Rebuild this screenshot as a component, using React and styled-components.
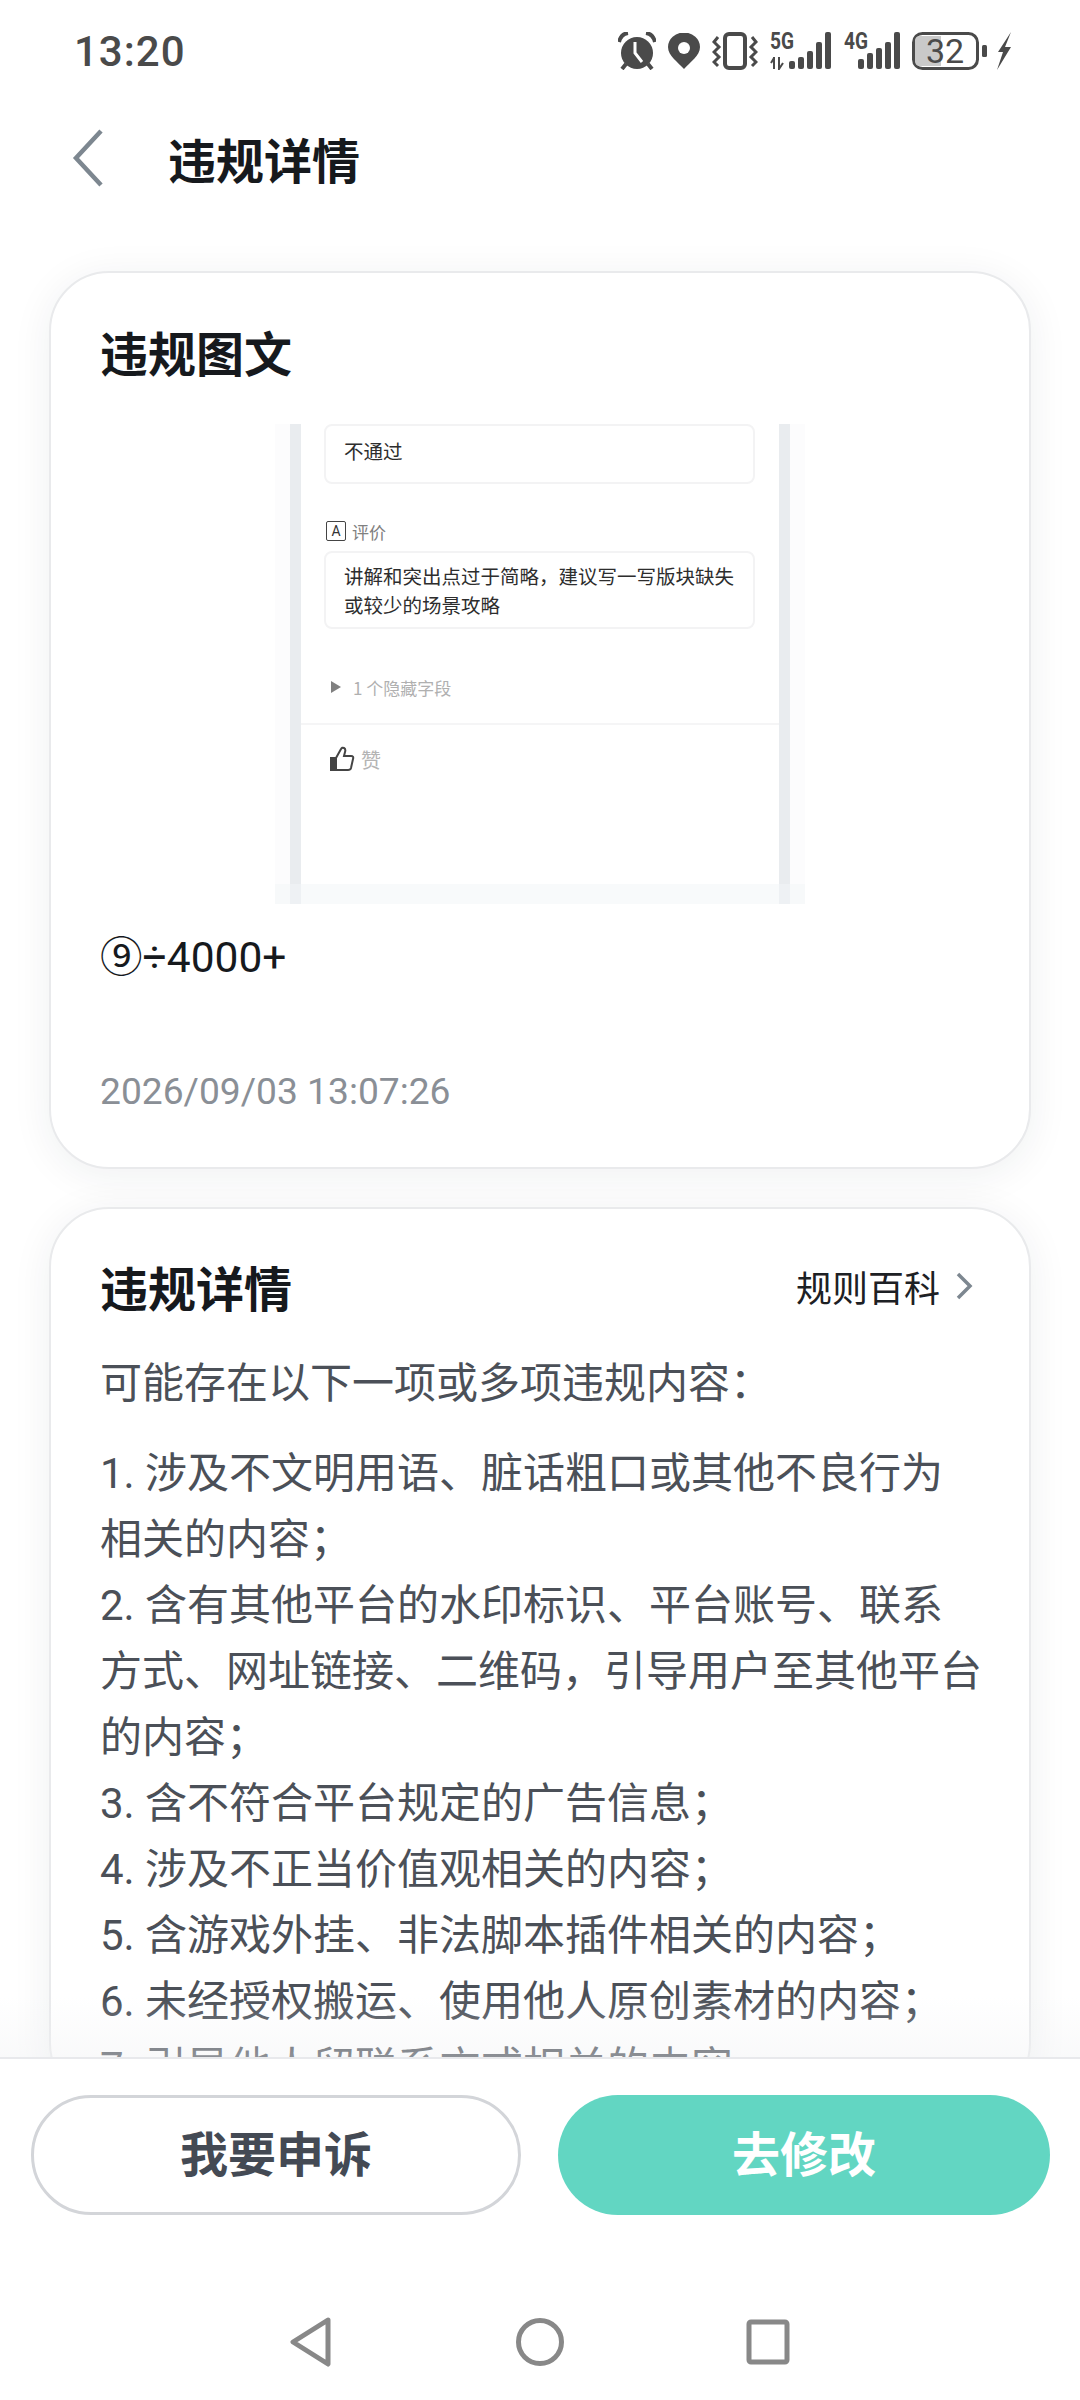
import React from "react";
import styled, { createGlobalStyle } from "styled-components";

const GlobalStyle = createGlobalStyle`
  html, body {
    margin: 0;
    padding: 0;
    background: #fff;
    font-family: Roboto, "Noto Sans CJK SC", sans-serif;
  }
  * { box-sizing: border-box; }
`;

const CJK = `"Noto Sans CJK SC", "Noto Sans", sans-serif`;

const Page = styled.div`
  width: 1080px;
  height: 2400px;
  display: flex;
  flex-direction: column;
  background: #fff;
  overflow: hidden;
`;

const StatusBar = styled.div`
  height: 102px;
  flex: none;
  display: flex;
  align-items: center;
  justify-content: space-between;
  padding: 0 68px 0 74px;
  color: #4a4a4a;
`;

const Time = styled.div`
  font-family: Roboto, sans-serif;
  font-size: 42px;
  font-weight: 500;
  letter-spacing: 1px;
`;

const StatusIcons = styled.div`
  display: flex;
  align-items: center;
  gap: 12px;
`;

const SignalSvg = styled.svg`
  margin-top: -6px;
`;

const BoltSvg = styled.svg`
  margin-left: -4px;
`;

const Header = styled.div`
  height: 118px;
  flex: none;
  display: flex;
  align-items: center;
  padding: 0 0 6px 72px;
`;

const BackButton = styled.div`
  width: 96px;
  display: flex;
  align-items: center;
`;

const HeaderTitle = styled.h1`
  margin: 0;
  font-family: ${CJK};
  font-size: 48px;
  font-weight: 700;
  color: #16191d;
`;

const Main = styled.div`
  flex: 1;
  min-height: 0;
  overflow: hidden;
  padding: 51px 49px 0;
  display: flex;
  flex-direction: column;
  gap: 38px;
`;

const Card = styled.section`
  flex: none;
  height: ${(p) => p.$height || "auto"};
  border-radius: 60px;
  background: #fff;
  border: 2px solid #e9eaec;
  box-shadow: 0 6px 40px rgba(30, 40, 60, 0.07);
  padding: ${(p) => p.$top}px 49px 0;
`;

const CardHead = styled.div`
  display: flex;
  align-items: center;
  justify-content: space-between;
  height: 72px;
  padding-right: 7px;
`;

const CardTitle = styled.h2`
  margin: 0;
  font-family: ${CJK};
  font-size: 48px;
  font-weight: 700;
  color: #16191d;
`;

const RuleLink = styled.div`
  display: flex;
  align-items: center;
  gap: 15px;
  font-family: ${CJK};
  font-size: 36px;
  color: #1d2024;
`;

const Shot = styled.div`
  width: 530px;
  height: 480px;
  margin: 37px 0 0 175px;
  padding: 0 15px;
  display: flex;
  flex-direction: column;
  justify-content: flex-end;
  background: linear-gradient(90deg, #fcfcfd 0, #fcfcfd 15px, #fff 15px, #fff 515px, #fcfcfd 515px);
`;

const ShotFrame = styled.div`
  flex: 1;
  min-height: 0;
  border-left: 11px solid #e9ecef;
  border-right: 11px solid #e9ecef;
  background: #fff;
  font-family: ${CJK};
`;

const ShotStrip = styled.div`
  flex: none;
  height: 20px;
  margin: -20px -15px 0;
  background: rgba(243, 245, 248, 0.55);
`;

const ShotBox = styled.div`
  margin: 0 24px 0 23px;
  height: ${(p) => p.$height}px;
  padding: ${(p) => p.$top}px 18px 0;
  border: 2px solid #f3f3f4;
  border-radius: 8px;
  font-size: 19.5px;
  line-height: 29px;
  color: #2d2d2d;
`;

const ShotLabel = styled.div`
  display: flex;
  align-items: center;
  gap: 6px;
  height: 22px;
  margin: 36px 0 9px 25px;
  font-size: 17px;
  color: #808080;
`;

const LetterBadge = styled.span`
  width: 20px;
  height: 20px;
  border: 1.5px solid #444;
  border-radius: 2px;
  display: flex;
  align-items: center;
  justify-content: center;
  font-family: Roboto, sans-serif;
  font-size: 14px;
  color: #333;
`;

const HiddenRow = styled.div`
  display: flex;
  align-items: center;
  gap: 12px;
  height: 26px;
  margin: 45px 0 23px 30px;
  font-size: 17px;
  color: #b0b0b0;
`;

const Triangle = styled.span`
  width: 0;
  height: 0;
  border-left: 10px solid #808080;
  border-top: 6px solid transparent;
  border-bottom: 6px solid transparent;
`;

const LikeRow = styled.div`
  display: flex;
  align-items: center;
  gap: 6px;
  height: 32px;
  padding: 0 0 0 28px;
  margin-top: 18px;
  font-size: 20px;
  color: #b4b4b4;
`;

const ShotRule = styled.div`
  height: 2px;
  background: #f5f5f6;
`;

const PostText = styled.p`
  margin: 27px 0 0;
  font-family: Roboto, ${CJK};
  font-size: 42.5px;
  line-height: 54px;
  color: #16191d;
`;

const PostDate = styled.p`
  margin: 80px 0 0;
  font-family: Roboto, sans-serif;
  font-size: 37.2px;
  line-height: 52px;
  color: #8a8f96;
`;

const Intro = styled.p`
  margin: 25px 0 28px;
  font-family: ${CJK};
  font-size: 42px;
  line-height: 66px;
  color: #4b5058;
`;

const RuleLine = styled.div`
  font-family: Roboto, ${CJK};
  font-size: 42px;
  line-height: 66px;
  color: #4b5058;
  white-space: nowrap;
`;

const Footer = styled.div`
  height: 208px;
  flex: none;
  display: flex;
  align-items: flex-start;
  justify-content: space-between;
  padding: 36px 30px 0 31px;
  background: #fff;
  border-top: 2px solid #e8e9ec;
  position: relative;

  &::before {
    content: "";
    position: absolute;
    left: 0;
    right: 0;
    top: -62px;
    height: 60px;
    background: linear-gradient(rgba(240, 241, 243, 0), rgba(240, 241, 243, 0.4));
  }
`;

const FooterButton = styled.button`
  width: ${(p) => (p.$primary ? 492 : 490)}px;
  height: 120px;
  padding: 0 0 8px;
  border-radius: 60px;
  border: ${(p) => (p.$primary ? "none" : "3px solid #d3d5d9")};
  background: ${(p) => (p.$primary ? "#62d6c2" : "#fff")};
  color: ${(p) => (p.$primary ? "#fff" : "#444a54")};
  font-family: ${CJK};
  font-size: 48px;
  font-weight: 700;
`;

const NavBar = styled.div`
  height: 135px;
  flex: none;
  display: flex;
  align-items: flex-start;
  justify-content: center;
  gap: 182px;
  padding: 52px 0 0 0;
  background: #fff;
`;

const AlarmIcon = () => (
  <svg width="38" height="38" viewBox="0 0 38 38">
    <circle cx="19" cy="21" r="16" fill="#4a4a4a" />
    <path d="M1 10 Q3 2 10 1 M37 10 Q35 2 28 1" stroke="#4a4a4a" strokeWidth="4" fill="none" />
    <path d="M4 37 L8 32 M34 37 L30 32" stroke="#4a4a4a" strokeWidth="4" />
    <path d="M17 10 V21 L24 30" stroke="#fff" strokeWidth="3" fill="none" />
  </svg>
);

const PinIcon = () => (
  <svg width="32" height="36" viewBox="0 0 32 36">
    <path d="M16 36 C10 29 0 23 0 14 A16 14.5 0 0 1 32 14 C32 23 22 29 16 36Z" fill="#4a4a4a" />
    <circle cx="16" cy="15" r="6" fill="#fff" />
  </svg>
);

const VibrateIcon = () => (
  <svg width="46" height="38" viewBox="0 0 46 38">
    <rect x="13" y="2" width="20" height="34" rx="4" fill="none" stroke="#4a4a4a" strokeWidth="4" />
    <path d="M6 5 L2 10 L7 15 L2 20 L7 25 L2 30 L6 34" fill="none" stroke="#4a4a4a" strokeWidth="3" />
    <path d="M40 5 L44 10 L39 15 L44 20 L39 25 L44 30 L40 34" fill="none" stroke="#4a4a4a" strokeWidth="3" />
  </svg>
);

const SignalIcon = ({ label, activity, width, bars }) => (
  <SignalSvg width={width} height="44" viewBox={`0 -6 ${width} 44`}>
    <text
      x="0"
      y="17"
      fontFamily="Roboto, sans-serif"
      fontWeight="700"
      fontSize="23"
      fill="#4a4a4a"
      textLength="24"
      lengthAdjust="spacingAndGlyphs"
    >
      {label}
    </text>
    {activity && <path d="M4 37 V25 M1 31 L4 26 M9 25 V37 L13 31" stroke="#4a4a4a" strokeWidth="2" fill="none" />}
    {bars.map(([x, h]) => (
      <rect key={x} x={x} y={37 - h} width="6" height={h} rx="2" fill="#4a4a4a" />
    ))}
  </SignalSvg>
);

const BatteryIcon = () => (
  <svg width="76" height="38" viewBox="0 0 76 38">
    <rect x="1.5" y="1.5" width="64" height="35" rx="9" fill="#fff" stroke="#4a4a4a" strokeWidth="3" />
    <path d="M8 4 H29 V34 H8 Q3 34 3 29 V9 Q3 4 8 4Z" fill="#c9c9c9" />
    <text x="33" y="31" textAnchor="middle" fontFamily="Roboto, sans-serif" fontSize="34" fill="#4a4a4a">
      32
    </text>
    <rect x="70" y="13" width="5" height="12" rx="1.5" fill="#4a4a4a" />
  </svg>
);

const BoltIcon = () => (
  <BoltSvg width="16" height="38" viewBox="0 0 16 38">
    <path d="M15 0 L2 20 H7 L1 38 L15 15 H9 Z" fill="#4a4a4a" />
  </BoltSvg>
);

const LikeIcon = () => (
  <svg width="26" height="26" viewBox="0 0 26 26">
    <path
      d="M2 12 H7 L12 3 Q13 1 15 2 Q17 3 16 6 L15 10 H22 Q25 10 24 13 L22 22 Q21.5 24 19 24 H2 Z M7 12 V24"
      fill="none"
      stroke="#444"
      strokeWidth="2"
    />
    <rect x="2" y="12" width="4" height="12" fill="#444" />
  </svg>
);

const rules = [
  "1. 涉及不文明用语、脏话粗口或其他不良行为",
  "相关的内容；",
  "2. 含有其他平台的水印标识、平台账号、联系",
  "方式、网址链接、二维码，引导用户至其他平台",
  "的内容；",
  "3. 含不符合平台规定的广告信息；",
  "4. 涉及不正当价值观相关的内容；",
  "5. 含游戏外挂、非法脚本插件相关的内容；",
  "6. 未经授权搬运、使用他人原创素材的内容；",
  "7. 引导他人留联系方式相关的内容",
];

const App = () => (
  <Page>
    <GlobalStyle />
    <StatusBar>
      <Time>13:20</Time>
      <StatusIcons>
        <AlarmIcon />
        <PinIcon />
        <VibrateIcon />
        <SignalIcon label="5G" activity width="62" bars={[[19, 8], [28, 12], [37, 18], [46, 27], [55, 37]]} />
        <SignalIcon label="4G" width="56" bars={[[14, 10], [23, 16], [32, 21], [41, 27], [50, 37]]} />
        <BatteryIcon />
        <BoltIcon />
      </StatusIcons>
    </StatusBar>

    <Header>
      <BackButton>
        <svg width="32" height="58" viewBox="0 0 32 58">
          <path d="M29 2 L4 29 L29 56" fill="none" stroke="#7d8790" strokeWidth="4.5" />
        </svg>
      </BackButton>
      <HeaderTitle>违规详情</HeaderTitle>
    </Header>

    <Main>
      <Card $top={42} $height="898px">
        <CardHead>
          <CardTitle>违规图文</CardTitle>
        </CardHead>
        <Shot>
          <ShotFrame>
            <ShotBox $top={10} $height={60}>不通过</ShotBox>
            <ShotLabel>
              <LetterBadge>A</LetterBadge>
              评价
            </ShotLabel>
            <ShotBox $top={8} $height={78}>
              讲解和突出点过于简略，建议写一写版块缺失
              <br />
              或较少的场景攻略
            </ShotBox>
            <HiddenRow>
              <Triangle />1 个隐藏字段
            </HiddenRow>
            <ShotRule />
            <LikeRow>
              <LikeIcon />赞
            </LikeRow>
          </ShotFrame>
          <ShotStrip />
        </Shot>
        <PostText>⑨÷4000+</PostText>
        <PostDate>2026/09/03 13:07:26</PostDate>
      </Card>

      <Card $top={41}>
        <CardHead>
          <CardTitle>违规详情</CardTitle>
          <RuleLink>
            规则百科
            <svg width="18" height="28" viewBox="0 0 18 28">
              <path d="M3 2 L15 14 L3 26" fill="none" stroke="#7d8790" strokeWidth="3.5" />
            </svg>
          </RuleLink>
        </CardHead>
        <Intro>可能存在以下一项或多项违规内容：</Intro>
        {rules.map((line) => (
          <RuleLine key={line}>{line}</RuleLine>
        ))}
      </Card>
    </Main>

    <Footer>
      <FooterButton>我要申诉</FooterButton>
      <FooterButton $primary>去修改</FooterButton>
    </Footer>

    <NavBar>
      <svg width="44" height="50" viewBox="0 0 44 50">
        <path d="M38 3 L3 25 L38 47 Z" fill="none" stroke="#888" strokeWidth="5" strokeLinejoin="round" />
      </svg>
      <svg width="48" height="50" viewBox="0 0 48 50">
        <circle cx="24" cy="25" r="21.5" fill="none" stroke="#888" strokeWidth="5" />
      </svg>
      <svg width="44" height="50" viewBox="0 0 44 50">
        <rect x="3" y="5" width="38" height="40" rx="2" fill="none" stroke="#888" strokeWidth="5" />
      </svg>
    </NavBar>
  </Page>
);

export default App;
